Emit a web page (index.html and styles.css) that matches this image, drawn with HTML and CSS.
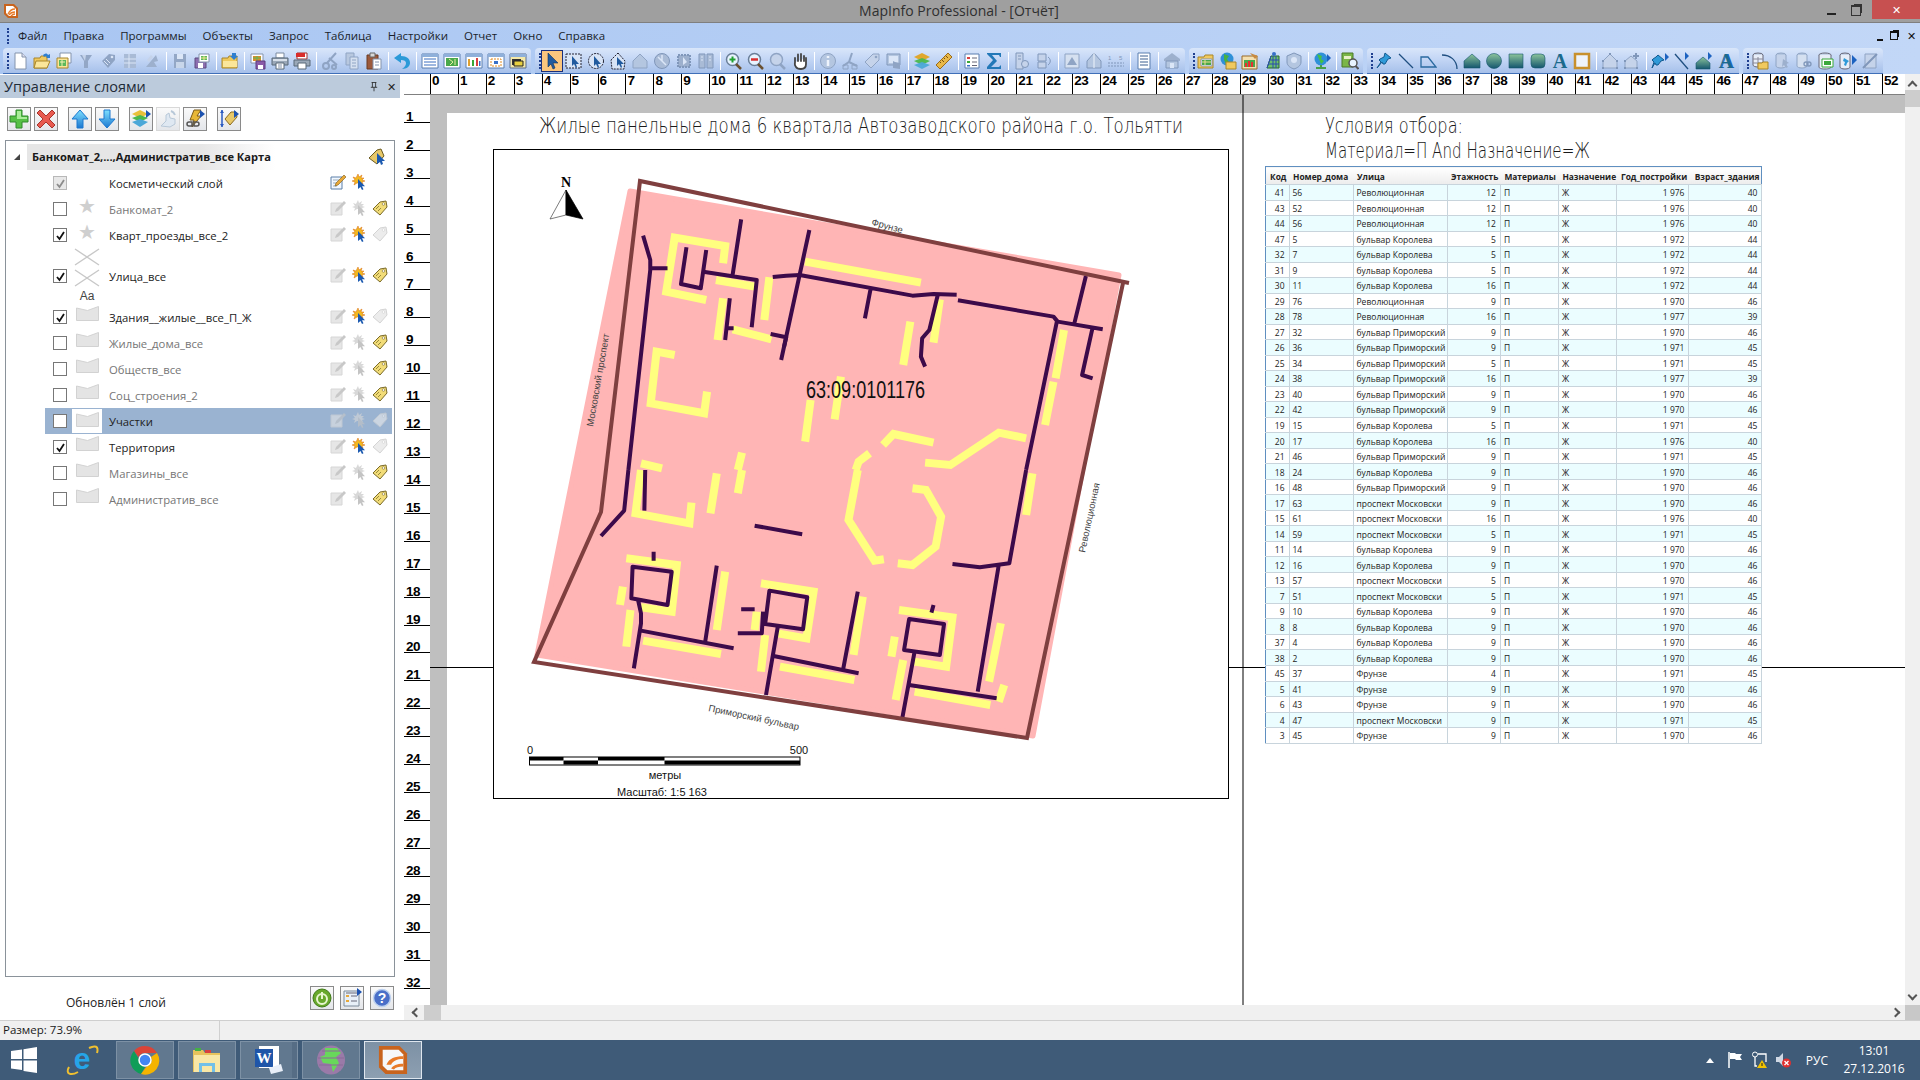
FILE: index.html
```html
<!DOCTYPE html>
<html lang="ru">
<head>
<meta charset="utf-8">
<title>MapInfo Professional - [Отчёт]</title>
<link rel="stylesheet" href="styles.css">
</head>
<body>
<svg class="defs" aria-hidden="true">
<defs>
<linearGradient id="gd" x1="0" y1="0" x2="0" y2="1"><stop offset="0" stop-color="#8cc49a"/><stop offset="1" stop-color="#14566e"/></linearGradient>
<linearGradient id="gb" x1="0" y1="0" x2="0" y2="1"><stop offset="0" stop-color="#7fe0ff"/><stop offset="1" stop-color="#1c78d0"/></linearGradient>
<symbol id="new" viewBox="0 0 18 18"><path d="M4 1h7l4 4v12H4z" fill="#fff" stroke="#8494ad"/><path d="M11 1v4h4" fill="#dde" stroke="#8494ad"/></symbol>
<symbol id="open" viewBox="0 0 18 18"><path d="M1 6h6l1-2h6v12H1z" fill="#f0c95e" stroke="#a9862a"/><path d="M1 16l2-7h14l-3 7z" fill="#fbe69a" stroke="#a9862a"/><path d="M10 3c2-2 4-2 5 0l2-1v4h-4l1-1c-1-1-2-1-3 0z" fill="#2f7fd0"/></symbol>
<symbol id="ws" viewBox="0 0 18 18"><path d="M5 1h11v10H5z" fill="#fff" stroke="#8494ad"/><path d="M2 6h11v10H2z" fill="#fbe69a" stroke="#a9862a"/><path d="M4 8h7v6H4z" fill="#5cb85c"/><path d="M5 10h5M7 8v6" stroke="#f6f3b0"/></symbol>
<symbol id="o1" viewBox="0 0 18 18"><path d="M3 3h12l-4 6v7H7V9z" fill="#93a7c6"/><path d="M5 3h4L8 9z" fill="#c5d3ea"/></symbol>
<symbol id="o2" viewBox="0 0 18 18"><path d="M3 9l7-7 6 1v5l-7 8z" fill="#8fa4c4"/><circle cx="13" cy="5" r="1.3" fill="#dbe6f7"/><path d="M5 9l4 4M7 7l4 4" stroke="#dbe6f7"/></symbol>
<symbol id="o3" viewBox="0 0 18 18"><path d="M3 2h12v14H3z" fill="#a9bbd6"/><path d="M3 7h12M3 11h12M8 2v14" stroke="#dbe6f7"/></symbol>
<symbol id="o4" viewBox="0 0 18 18"><path d="M3 15L13 3l2 6-4 1 3 5z" fill="#9db0cd"/><path d="M4 8l4-5 2 2-4 5z" fill="#c5d3ea"/></symbol>
<symbol id="fl" viewBox="0 0 18 18"><path d="M3 2h12v14H3z" fill="#93a7c6"/><path d="M6 2h6v5H6z" fill="#dbe6f7"/><path d="M5 10h8v6H5z" fill="#c8d6ea"/></symbol>
<symbol id="flc" viewBox="0 0 18 18"><path d="M2 6h11v10H2z" fill="#8d6fb0" stroke="#5d4a80"/><path d="M5 11h5v5H5z" fill="#fff"/><path d="M6 2h10v8H6z" fill="#fff" stroke="#8494ad"/><path d="M8 4h6v4H8z" fill="#5cb85c"/><path d="M8 6h6M11 4v4" stroke="#f0e890"/></symbol>
<symbol id="fa" viewBox="0 0 18 18"><path d="M1 6h6l1-2h8v12H1z" fill="#efc95b" stroke="#a9862a"/><path d="M2 9h14v6H2z" fill="#fbe69a"/><path d="M11 1h4v3l2 0-4 4-4-4h2z" fill="#2f7fd0"/></symbol>
<symbol id="sm" viewBox="0 0 18 18"><path d="M2 2h12v9H2z" fill="#fff" stroke="#8494ad"/><path d="M4 4h8v5H4z" fill="#d98c2b"/><path d="M4 6h8M8 4v5" stroke="#5cb85c"/><path d="M7 9h9v8H7z" fill="#8a5aa8" stroke="#5d3a80"/><path d="M9 13h5v4H9z" fill="#fff"/></symbol>
<symbol id="pr" viewBox="0 0 18 18"><path d="M5 1h8v5H5z" fill="#fff" stroke="#7a8aa0"/><path d="M1 6h16v7H1z" fill="#9aa8b8" stroke="#586878"/><path d="M2 7h14v2H2z" fill="#d8e0ea"/><path d="M5 11h8v6H5z" fill="#fff" stroke="#586878"/><path d="M7 13h4M7 15h4" stroke="#8494ad"/></symbol>
<symbol id="pdf" viewBox="0 0 18 18"><path d="M4 1h10v6H4z" fill="#fff" stroke="#a03030"/><path d="M3 1h9v4H3z" fill="#d92c2c"/><path d="M1 8h16v6H1z" fill="#9aa8b8" stroke="#586878"/><path d="M5 11h8v6H5z" fill="#fff" stroke="#586878"/></symbol>
<symbol id="sc" viewBox="0 0 18 18"><path d="M15 1L6 11M8 6l8 7" stroke="#8fa4c4" stroke-width="2" fill="none"/><circle cx="5" cy="14" r="3" fill="none" stroke="#8fa4c4" stroke-width="2"/><circle cx="13" cy="15" r="2" fill="none" stroke="#8fa4c4" stroke-width="2"/></symbol>
<symbol id="cp" viewBox="0 0 18 18"><path d="M3 1h8v12H3z" fill="#b8c8df" stroke="#8fa4c4"/><path d="M7 5h8v12H7z" fill="#d5e0f0" stroke="#8fa4c4"/><path d="M9 8h4M9 11h4M9 14h4" stroke="#8fa4c4"/></symbol>
<symbol id="pa" viewBox="0 0 18 18"><path d="M2 3h11v14H2z" fill="#9c5a3c" stroke="#6a3a22"/><path d="M5 1h5v4H5z" fill="#d8d8d8" stroke="#666"/><path d="M8 7h8v10H8z" fill="#fff" stroke="#8494ad"/><path d="M10 10h4M10 13h4" stroke="#8494ad"/></symbol>
<symbol id="un" viewBox="0 0 18 18"><path d="M1 6l7-5v3c6 0 9 3 9 7 0 3-3 6-8 6 3-2 4-4 4-6 0-2-2-3-5-3v3z" fill="#2b9ad8"/></symbol>
<symbol id="wt" viewBox="0 0 18 18"><path d="M1 2h16v14H1z" fill="#fff" stroke="#5a7fb0"/><path d="M1 2h16v3H1z" fill="#8fb0da"/><path d="M3 7h12M3 10h12M3 13h12" stroke="#3b6fc0"/></symbol>
<symbol id="wm" viewBox="0 0 18 18"><path d="M1 2h16v14H1z" fill="#fff" stroke="#5a7fb0"/><path d="M1 2h16v3H1z" fill="#8fb0da"/><path d="M3 6h12v8H3z" fill="#4aa84a"/><path d="M6 7l4 3-3 3M12 7v6" stroke="#e8f0a0" fill="none"/></symbol>
<symbol id="wc" viewBox="0 0 18 18"><path d="M1 2h16v14H1z" fill="#fff" stroke="#5a7fb0"/><path d="M1 2h16v3H1z" fill="#8fb0da"/><path d="M3 7h2v7H3z" fill="#e0a030"/><path d="M7 8h2v6H7z" fill="#38a838"/><path d="M11 6h2v8h-2z" fill="#d84040"/><path d="M14 9h1.500v5H14z" fill="#3870c8"/></symbol>
<symbol id="wl" viewBox="0 0 18 18"><path d="M1 2h16v14H1z" fill="#fff" stroke="#5a7fb0"/><path d="M1 2h16v3H1z" fill="#8fb0da"/><path d="M4 7h10v7H4z" fill="#fff" stroke="#e08a20" stroke-dasharray="2 1"/><path d="M7 9h4v3H7z" fill="#3870c8"/></symbol>
<symbol id="wb" viewBox="0 0 18 18"><path d="M1 2h16v14H1z" fill="#f4e8a8" stroke="#5a6f90"/><path d="M1 2h16v3H1z" fill="#8fb0da"/><path d="M3 7h9v6H3z" fill="#333"/><path d="M5 9h9v5H5z" fill="#e8d040" stroke="#222"/></symbol>
<symbol id="cu" viewBox="0 0 18 18"><path d="M5 1v14l3-3 2 5 2-1-2-5h5z" fill="#205a9e" stroke="#0f2f60" stroke-width=".6"/></symbol>
<symbol id="sr" viewBox="0 0 18 18"><path d="M1 2h15v14H1z" fill="#d8e4f6" stroke="#223" stroke-dasharray="2 1"/><path d="M7 4v10l2-2 2 4 1-1-1-3h3z" fill="#205a9e"/></symbol>
<symbol id="sa" viewBox="0 0 18 18"><circle cx="9" cy="9" r="7.500" fill="#d8e4f6" stroke="#223" stroke-dasharray="2 1"/><path d="M7 4v10l2-2 2 4 1-1-1-3h3z" fill="#205a9e"/></symbol>
<symbol id="sp" viewBox="0 0 18 18"><path d="M9 1l7 8-1 8H3L2 8z" fill="#d8e4f6" stroke="#223" stroke-dasharray="2 1"/><path d="M8 5v9l2-2 2 4 1-1-1-3h3z" fill="#205a9e"/></symbol>
<symbol id="hb" viewBox="0 0 18 18"><path d="M9 2l7 7v7H2V9z" fill="#b4c6e0" stroke="#8fa4c4"/></symbol>
<symbol id="oc" viewBox="0 0 18 18"><circle cx="9" cy="9" r="7.500" fill="#a9bbd6" stroke="#8097ba"/><path d="M5 5l8 8M9 3v6" stroke="#dbe6f7" stroke-width="1.500"/></symbol>
<symbol id="od" viewBox="0 0 18 18"><path d="M3 3h12v12H3z" fill="#9db0cd" stroke="#8097ba" stroke-dasharray="2 1" stroke-width="2"/><path d="M8 5v8l4-3z" fill="#dbe6f7"/></symbol>
<symbol id="oe" viewBox="0 0 18 18"><path d="M2 2h6v14H2zM10 2h6v14h-6z" fill="#a9bbd6" stroke="#8097ba"/><path d="M4 5h2M4 8h2M12 5h2M12 8h2" stroke="#dbe6f7"/></symbol>
<symbol id="zi" viewBox="0 0 18 18"><circle cx="7.500" cy="7.500" r="6" fill="#e8f4ff" stroke="#6a7f99" stroke-width="1.500"/><path d="M11 12l5 5" stroke="#6a5030" stroke-width="2.500"/><path d="M4.500 7.500h6M7.500 4.500v6" stroke="#20a030" stroke-width="2"/></symbol>
<symbol id="zo" viewBox="0 0 18 18"><circle cx="7.500" cy="7.500" r="6" fill="#e8f4ff" stroke="#6a7f99" stroke-width="1.500"/><path d="M11 12l5 5" stroke="#6a5030" stroke-width="2.500"/><path d="M4 7.500h7" stroke="#d83030" stroke-width="2.500"/></symbol>
<symbol id="zq" viewBox="0 0 18 18"><circle cx="7.500" cy="7.500" r="6" fill="#c5d3ea" stroke="#8fa4c4" stroke-width="1.500"/><path d="M11 12l5 5" stroke="#8fa4c4" stroke-width="2.500"/></symbol>
<symbol id="ha" viewBox="0 0 18 18"><path d="M4 10V6M7 9V2.500M10 9V2M13 9V4M4 10c0 3-1 2 1 5 1 2 3 2 5 2 3 0 5-2 5-5V6" fill="#fff" stroke="#444" stroke-width="1.800" stroke-linecap="round"/></symbol>
<symbol id="oi" viewBox="0 0 18 18"><circle cx="9" cy="9" r="7.500" fill="#b4c6e0" stroke="#8fa4c4"/><path d="M9 4v2M9 8v6" stroke="#eef4fc" stroke-width="2.500"/></symbol>
<symbol id="ol" viewBox="0 0 18 18"><path d="M11 1L8 10M2 14l6-4 8 4" stroke="#8fa4c4" stroke-width="2" fill="none"/><path d="M2 13h5v4H2zM11 13h5v4h-5z" fill="none" stroke="#8fa4c4"/></symbol>
<symbol id="ot" viewBox="0 0 18 18"><path d="M2 10l8-8 6 0v6l-8 8z" fill="#c5d3ea" stroke="#8fa4c4"/><circle cx="13" cy="5" r="1.300" fill="#8fa4c4"/></symbol>
<symbol id="om" viewBox="0 0 18 18"><path d="M2 2h13v11H2z" fill="#b4c6e0" stroke="#8097ba"/><path d="M4 4h9v7H4z" fill="#dbe6f7"/><path d="M8 16V9l2 1 5 1v6z" fill="#8fa4c4"/></symbol>
<symbol id="la" viewBox="0 0 18 18"><path d="M9 1l8 4-8 4-8-4z" fill="#e0a72e"/><path d="M1 9l8 4 8-4-8-3z" fill="#4cb84c" opacity=".95"/><path d="M1 13l8 4 8-4-8-3z" fill="#4ca8d8" opacity=".95"/></symbol>
<symbol id="ru" viewBox="0 0 18 18"><path d="M13 1l4 4L5 17l-4-4z" fill="#e8b848" stroke="#9a6a18"/><path d="M5 10l1 1M7 8l2 2M9 6l1 1M11 4l2 2" stroke="#7a5010"/></symbol>
<symbol id="lg" viewBox="0 0 18 18"><path d="M2 2h14v14H2z" fill="#fff" stroke="#5a7fb0"/><path d="M4 5h3v2H4z" fill="#d84040"/><path d="M4 9h3v2H4z" fill="#38a838"/><path d="M4 13h3v1.500H4z" fill="#3870c8"/><path d="M9 6h5M9 10h5M9 13.500h5" stroke="#667"/></symbol>
<symbol id="si" viewBox="0 0 18 18"><path d="M2 1h14v4l-1 0-1-2H7l5 6-6 6h8l2-2v4H2v-2l6-7-6-6z" fill="#2278b8"/></symbol>
<symbol id="og" viewBox="0 0 18 18"><path d="M3 1h7v16H3z" fill="#c5d3ea" stroke="#8097ba"/><circle cx="12" cy="12" r="3.500" fill="#c5d3ea" stroke="#8097ba"/><path d="M5 4h3M5 7h3" stroke="#8097ba"/></symbol>
<symbol id="og2" viewBox="0 0 18 18"><path d="M3 2h8v7H3zM3 10h8v6H3z" fill="#c5d3ea" stroke="#8097ba"/><path d="M13 5c3 2 3 6 0 8" fill="none" stroke="#8097ba"/></symbol>
<symbol id="oh" viewBox="0 0 18 18"><path d="M2 2h14v14H2z" fill="#d5e0f0" stroke="#8fa4c4"/><path d="M9 5l5 8H4z" fill="#8fa4c4"/></symbol>
<symbol id="ok" viewBox="0 0 18 18"><path d="M9 1l7 8v7H2V9z" fill="#b4c6e0" stroke="#8097ba"/><path d="M9 1v15" stroke="#eef4fc"/></symbol>
<symbol id="on" viewBox="0 0 18 18"><path d="M1 11h16M1 14h16" stroke="#8097ba" stroke-dasharray="2 1"/><text x="1" y="8" class="ic-t">1</text><text x="12" y="8" class="ic-t">5</text></symbol>
<symbol id="ls" viewBox="0 0 18 18"><path d="M3 1h12v16H3z" fill="#fff" stroke="#5a7fb0"/><path d="M5 4h8M5 7h8M5 10h8M5 13h8" stroke="#3b5f90"/></symbol>
<symbol id="ob" viewBox="0 0 18 18"><path d="M9 1l8 6v2H1V7z" fill="#9db0cd"/><path d="M3 9h12v7H3z" fill="#b4c6e0" stroke="#8097ba"/><path d="M7 11h4v5H7z" fill="#dbe6f7"/></symbol>
<symbol id="fm" viewBox="0 0 18 18"><path d="M1 5h6l1-2h8v13H1z" fill="#f0c95e" stroke="#a9862a"/><path d="M4 7h11v7H4z" fill="#fff" stroke="#8494ad"/><path d="M5 8h9v5H5z" fill="#4aa84a"/><path d="M8 8v5M5 10h9" stroke="#e8e090"/></symbol>
<symbol id="gf" viewBox="0 0 18 18"><circle cx="8" cy="7" r="6.500" fill="#2f90d8"/><path d="M5 2l5 2-2 3 2 3-3 2-2-4z" fill="#45b045"/><path d="M7 10h10v7H7z" fill="#f0c95e" stroke="#a9862a"/></symbol>
<symbol id="cm" viewBox="0 0 18 18"><path d="M1 4h15v13H1z" fill="#f4e0b0" stroke="#9a6a28"/><path d="M3 8h11v7H3z" fill="#4aa84a"/><path d="M5 15v-4M8 15V9M11 15v-5" stroke="#e83030" stroke-width="2"/><path d="M9 1l8 3-3 3z" fill="#c88a40"/></symbol>
<symbol id="gg" viewBox="0 0 18 18"><path d="M4 16L8 4h8v12z" fill="#6dc06d" stroke="#286828"/><path d="M8 4l-4 12M10 4v12M13 4v12M5 12h11M7 8h9" stroke="#2a4ab0" fill="none"/><circle cx="11" cy="2" r="2" fill="#3870c8"/></symbol>
<symbol id="os" viewBox="0 0 18 18"><path d="M9 1l7 3v6c0 4-4 6-7 7-3-1-7-3-7-7V4z" fill="#b4c6e0" stroke="#8097ba"/><circle cx="9" cy="8" r="3" fill="#dbe6f7"/></symbol>
<symbol id="gs" viewBox="0 0 18 18"><circle cx="8" cy="7" r="6.500" fill="#2f90d8"/><path d="M4 2l5 2-1 3 3 2-3 3-2-5z" fill="#45c045"/><path d="M8 13v2M3 16h10" stroke="#48a048" stroke-width="2"/><path d="M14 2l4 4-4 4z" fill="#1c62c0"/></symbol>
<symbol id="bk" viewBox="0 0 18 18"><path d="M1 1h11v14H1z" fill="#7ab648" stroke="#4a7828"/><path d="M3 4h7v3H3z" fill="#e8f0c8"/><circle cx="12" cy="11" r="4" fill="#e8f4ff" stroke="#555" stroke-width="1.500"/><path d="M14.500 14l3 3" stroke="#555" stroke-width="2"/></symbol>
<symbol id="pi" viewBox="0 0 18 18"><path d="M10 1l6 5-3 1-3 5-2 0-1-2-5 6 4-6-2-2 1-1 4-2z" fill="#2f9ad8" stroke="#125a90"/></symbol>
<symbol id="li" viewBox="0 0 18 18"><path d="M2 2l14 14" stroke="#1f4f80" stroke-width="1.300"/></symbol>
<symbol id="pl" viewBox="0 0 18 18"><path d="M2 15V5l7 0 8 10z" fill="none" stroke="#2a6aa0" stroke-width="1.300"/></symbol>
<symbol id="ar" viewBox="0 0 18 18"><path d="M1 3c8 0 15 5 15 14" fill="none" stroke="#1f4f80" stroke-width="1.300"/></symbol>
<symbol id="pg" viewBox="0 0 18 18"><path d="M9 2l8 7v7H1V9z" fill="url(#gd)" stroke="#14566e" stroke-width=".6"/></symbol>
<symbol id="el" viewBox="0 0 18 18"><circle cx="9" cy="9" r="7.500" fill="url(#gd)" stroke="#14566e" stroke-width=".6"/></symbol>
<symbol id="re" viewBox="0 0 18 18"><path d="M2 2h14v14H2z" fill="url(#gd)" stroke="#14566e" stroke-width=".6"/></symbol>
<symbol id="rr" viewBox="0 0 18 18"><rect x="2" y="2" width="14" height="14" rx="4" fill="url(#gd)" stroke="#14566e" stroke-width=".6"/></symbol>
<symbol id="fr" viewBox="0 0 18 18"><path d="M2 2h14v14H2z" fill="#eef3fb" stroke="#c8902c" stroke-width="2.500"/></symbol>
<symbol id="ph" viewBox="0 0 18 18"><path d="M9 2l7 7v7H2V9z" fill="#c5d3ea" stroke="#8fa4c4"/><path d="M8 1h2v2H8zM1 8h2v2H1zM15 8h2v2h-2zM1 15h2v2H1zM15 15h2v2h-2z" fill="#8097ba"/></symbol>
<symbol id="pp" viewBox="0 0 18 18"><path d="M8 4l6 5v7H2V9z" fill="#c5d3ea" stroke="#8fa4c4"/><path d="M1 15h2v2H1zM13 15h2v2h-2zM1 8h2v2H1z" fill="#8097ba"/><path d="M13 1v6M10 4h6" stroke="#8097ba" stroke-width="2"/></symbol>
<symbol id="pia" viewBox="0 0 18 18"><path d="M7 3l6 5-3 1-3 4-2 0-1-2-3 5 2-6-2-2 1-1 3-2z" fill="#2f9ad8" stroke="#125a90"/><path d="M14 1l4 4-4 4z" fill="#1c62c0"/></symbol>
<symbol id="lia" viewBox="0 0 18 18"><path d="M2 2l13 15" stroke="#1f4f80" stroke-width="1.300"/><path d="M12 0l4 4-4 4z" fill="#1c62c0"/></symbol>
<symbol id="pga" viewBox="0 0 18 18"><path d="M8 5l7 6v6H1v-6z" fill="url(#gd)" stroke="#14566e" stroke-width=".6"/><path d="M13 0l4 4-4 4z" fill="#1c62c0"/></symbol>
<symbol id="db" viewBox="0 0 18 18"><ellipse cx="7" cy="3" rx="5" ry="2" fill="#c8d6ea" stroke="#667"/><path d="M2 3v10c0 1 2 2 5 2s5-1 5-2V3" fill="#e8eef8" stroke="#667"/><path d="M2 7h10M2 11h10M7 5v10" stroke="#889"/><path d="M7 11h4l1-1h5v7H7z" fill="#f0c95e" stroke="#a9862a"/></symbol>
<symbol id="d1" viewBox="0 0 18 18"><ellipse cx="8" cy="3" rx="5" ry="2" fill="#b4c6e0" stroke="#8fa4c4"/><path d="M3 3v11c0 1 2 2 5 2s5-1 5-2V3" fill="#c5d3ea" stroke="#8fa4c4"/><path d="M10 7l6 4-3 1 2 3-2 1-2-3-2 2z" fill="#9db0cd"/></symbol>
<symbol id="d2" viewBox="0 0 18 18"><ellipse cx="7" cy="3" rx="5" ry="2" fill="#b4c6e0" stroke="#8fa4c4"/><path d="M2 3v11c0 1 2 2 5 2s5-1 5-2V3" fill="#d5e0f0" stroke="#8fa4c4"/><path d="M9 12a2 2 0 014 0 2 2 0 01-4 0zM12 12a2 2 0 014 0 2 2 0 01-4 0z" fill="none" stroke="#8097ba" stroke-width="1.300"/></symbol>
<symbol id="dt" viewBox="0 0 18 18"><ellipse cx="8" cy="3" rx="6" ry="2" fill="#c8d6ea" stroke="#667"/><path d="M2 3v12c0 1 2 2 6 2s6-1 6-2V3" fill="#e8eef8" stroke="#667"/><path d="M5 7h11v8H5z" fill="#fff" stroke="#38a838"/><path d="M7 9h7v4H7z" fill="#3ca83c"/></symbol>
<symbol id="dg" viewBox="0 0 18 18"><ellipse cx="6" cy="3" rx="5" ry="2" fill="#c8d6ea" stroke="#667"/><path d="M1 3v12c0 1 2 2 5 2s5-1 5-2V3" fill="#e8eef8" stroke="#667"/><path d="M5 6l5 3-2 2-1 3-2-1 1-3-2-1z" fill="#2f9ad8"/><path d="M13 3l5 5-5 5z" fill="#1c62c0"/></symbol>
<symbol id="sl" viewBox="0 0 18 18"><path d="M4 2h11v14H4z" fill="#c5d3ea" stroke="#8fa4c4"/><path d="M2 16L16 2" stroke="#8097ba" stroke-width="2"/></symbol>
<symbol id="add" viewBox="0 0 20 20"><path d="M7 1h6v6h6v6h-6v6H7v-6H1V7h6z" fill="#56c046" stroke="#2f8a2a"/><path d="M8 2h4v6h6v2H8z" fill="#a8ec98"/></symbol>
<symbol id="del" viewBox="0 0 20 20"><path d="M4 1l6 6 6-6 3 3-6 6 6 6-3 3-6-6-6 6-3-3 6-6-6-6z" fill="#e85a50" stroke="#a8342c"/></symbol>
<symbol id="up" viewBox="0 0 20 20"><path d="M10 1l8 9h-5v9H7v-9H2z" fill="url(#gb)" stroke="#1c78d0"/></symbol>
<symbol id="dn" viewBox="0 0 20 20"><path d="M10 19l8-9h-5V1H7v9H2z" fill="url(#gb)" stroke="#1c78d0"/></symbol>
<symbol id="lyr" viewBox="0 0 20 20"><path d="M9 1l8 4-8 4-8-4z" fill="#e8c03a"/><path d="M1 9l8 4 8-4-8-3z" fill="#4cb84c"/><path d="M1 13l8 5 8-5-8-3z" fill="#4ca8d8"/><path d="M15 1l5 4-5 4z" fill="#1c52b0"/></symbol>
<symbol id="rf" viewBox="0 0 20 20"><path d="M3 17l5-5V6l3-2 1 5 5 1v5l-5 3z" fill="#dfe8f2" stroke="#b8c8d8"/><path d="M13 2a7 7 0 014 4" fill="none" stroke="#b8c8d8" stroke-width="2"/></symbol>
<symbol id="lk" viewBox="0 0 20 20"><path d="M9 1h7l-4 6h4L7 18l2-7H5z" fill="#e8b838" stroke="#7a5a18"/><path d="M2 15a2 2 0 012-2h3v4H4a2 2 0 01-2-2zM9 13h3a2 2 0 010 4H9z" fill="none" stroke="#555" stroke-width="1.500"/><path d="M15 1l5 4-5 4z" fill="#1c52b0"/></symbol>
<symbol id="tg" viewBox="0 0 20 20"><path d="M6 10l6-7 5 0 1 5-7 8z" fill="#e8c868" stroke="#8a6a20"/><path d="M3 1v17" stroke="#2a5ac0" stroke-width="1.500"/><path d="M1 4l2-3 2 3zM1 15l2 3 2-3z" fill="#2a5ac0"/><path d="M15 1l5 4-5 4z" fill="#1c52b0"/></symbol>
<symbol id="pw" viewBox="0 0 20 20"><circle cx="10" cy="10" r="9" fill="#68a82c" stroke="#3f7a18"/><circle cx="10" cy="11" r="5" fill="none" stroke="#e8f6d0" stroke-width="2"/><path d="M10 4v7" stroke="#e8f6d0" stroke-width="2"/></symbol>
<symbol id="li2" viewBox="0 0 20 20"><path d="M2 3h15v15H2z" fill="#e8f0f8" stroke="#7a8a9a"/><path d="M4 7h3v2H4zM4 12h3v2H4z" fill="#e8a838"/><path d="M9 8h6M9 13h6M4 5h11" stroke="#667"/><path d="M15 0l5 4-5 4z" fill="#1c52b0"/></symbol>
<symbol id="hp" viewBox="0 0 20 20"><circle cx="10" cy="10" r="8.500" fill="#4a6fc8" stroke="#bcd0ee" stroke-width="1.500"/><text x="10" y="15" class="ic-q">?</text></symbol>
<symbol id="penA" viewBox="0 0 16 16"><path d="M1 3h11v12H1z" fill="#f2f8ff" stroke="#5a7fa8"/><path d="M3 6h6M3 9h5M3 12h4" stroke="#9ab"/><path d="M14 1l2 2-8 8-3 1 1-3z" fill="#e8a838" stroke="#7a5a18" stroke-width=".6"/></symbol>
<symbol id="penO" viewBox="0 0 16 16"><path d="M1 3h11v12H1z" fill="#e6e6e6" stroke="#d6d6d6"/><path d="M14 1l2 2-8 8-3 1 1-3z" fill="#c8c8c8"/></symbol>
<symbol id="sA" viewBox="0 0 16 16"><path d="M7 0l1 3 3-2-1 3 3 0-2 2 3 1-3 1 1 2-3-1H7L6 9 3 11l1-3-3-1 3-1-2-3 3 1z" fill="#f2b820" stroke="#d86a10" stroke-width=".5"/><path d="M7 5v10l2.500-2 1.500 3 1.500-.7-1.500-3h3z" fill="#1c5ab0"/></symbol>
<symbol id="sO" viewBox="0 0 16 16"><path d="M7 0l1 3 3-2-1 3 3 0-2 2 3 1-3 1 1 2-3-1H7L6 9 3 11l1-3-3-1 3-1-2-3 3 1z" fill="#d8d8d8"/><path d="M7 5v10l2.500-2 1.500 3 1.500-.7-1.500-3h3z" fill="#c4c4c4"/></symbol>
<symbol id="tY" viewBox="0 0 16 16"><path d="M1 9l7-7 6-1 1 6-7 8z" fill="#f2dc78" stroke="#7a6a28"/><circle cx="11.500" cy="4" r="1.300" fill="#fff" stroke="#7a6a28" stroke-width=".6"/><path d="M4 9l3-3M6 11l3-3" stroke="#9a8a38"/></symbol>
<symbol id="tG" viewBox="0 0 16 16"><path d="M1 9l7-7 6-1 1 6-7 8z" fill="#ececec" stroke="#d4d4d4"/><circle cx="11.500" cy="4" r="1.300" fill="#fff" stroke="#ccc" stroke-width=".6"/></symbol>
<symbol id="tC" viewBox="0 0 18 18"><path d="M1 10l8-8 4-1 3 7-7 8z" fill="#e8c868" stroke="#6a5a20"/><path d="M9 5v11l3-2 1 3 2-1-1-3h3z" fill="#1c5ab0"/></symbol>
<symbol id="sw" viewBox="0 0 23 15"><path d="M.5 2l11 2.500 11-4V14.500H.5z" fill="#e4e4e4" stroke="#d2d2d2"/></symbol>
<symbol id="xs" viewBox="0 0 26 18"><path d="M1 1l24 16M25 1L1 17" stroke="#c8c8c8" stroke-width="1.400"/></symbol>
<symbol id="chk" viewBox="0 0 11 11"><path d="M2 6l2.500 3L9 2" fill="none" stroke="currentColor" stroke-width="1.800"/></symbol>
</defs>
</svg>

<header class="titlebar">
  <svg class="app-ico" viewBox="0 0 16 16"><path d="M1 1h10l4 4v10H5l-4-4z" fill="#c8641e"/><path d="M3 3h7l3 3v7H6l-3-3z" fill="#fff"/><path d="M5 11c2-4 4-5 7-5M6 12c2-3 4-3 6-3M8 13c1-1 3-2 4-2" stroke="#e87a28" stroke-width="1.300" fill="none"/></svg>
  <span class="title-text">MapInfo Professional - [Отчёт]</span>
  <div class="win-ctrls">
    <span class="wc-min"></span>
    <span class="wc-max"></span>
    <span class="wc-close">✕</span>
  </div>
</header>

<nav class="menubar">
  <span class="grip"></span>
  <ul class="menu">
    <li>Файл</li><li>Правка</li><li>Программы</li><li>Объекты</li><li>Запрос</li><li>Таблица</li><li>Настройки</li><li>Отчет</li><li>Окно</li><li>Справка</li>
  </ul>
  <div class="mdi-ctrls">
    <span class="mdi-min"></span>
    <span class="mdi-max"></span>
    <span class="mdi-close">✕</span>
  </div>
</nav>

<div class="toolstrip">
  <div class="tb tb1"><span class="grip"></span>
    <svg class="i"><use href="#new"/></svg><svg class="i"><use href="#open"/></svg><svg class="i"><use href="#ws"/></svg><svg class="i"><use href="#o1"/></svg><svg class="i"><use href="#o2"/></svg><svg class="i"><use href="#o3"/></svg><svg class="i"><use href="#o4"/></svg><b class="sep"></b>
    <svg class="i"><use href="#fl"/></svg><svg class="i"><use href="#flc"/></svg><b class="sep"></b>
    <svg class="i"><use href="#fa"/></svg><b class="sep"></b>
    <svg class="i"><use href="#sm"/></svg><svg class="i"><use href="#pr"/></svg><svg class="i"><use href="#pdf"/></svg><b class="sep"></b>
    <svg class="i"><use href="#sc"/></svg><svg class="i"><use href="#cp"/></svg><svg class="i"><use href="#pa"/></svg><b class="sep"></b>
    <svg class="i"><use href="#un"/></svg><b class="sep"></b>
    <svg class="i"><use href="#wt"/></svg><svg class="i"><use href="#wm"/></svg><svg class="i"><use href="#wc"/></svg><svg class="i"><use href="#wl"/></svg><svg class="i"><use href="#wb"/></svg>
  </div>
  <div class="tb tb2"><span class="grip"></span>
    <span class="sel"><svg class="i"><use href="#cu"/></svg></span><svg class="i"><use href="#sr"/></svg><svg class="i"><use href="#sa"/></svg><svg class="i"><use href="#sp"/></svg><svg class="i"><use href="#hb"/></svg><svg class="i"><use href="#oc"/></svg><svg class="i"><use href="#od"/></svg><svg class="i"><use href="#oe"/></svg><b class="sep"></b>
    <svg class="i"><use href="#zi"/></svg><svg class="i"><use href="#zo"/></svg><svg class="i"><use href="#zq"/></svg><svg class="i"><use href="#ha"/></svg><b class="sep"></b>
    <svg class="i"><use href="#oi"/></svg><svg class="i"><use href="#ol"/></svg><svg class="i"><use href="#ot"/></svg><svg class="i"><use href="#om"/></svg><b class="sep"></b>
    <svg class="i"><use href="#la"/></svg><svg class="i"><use href="#ru"/></svg><b class="sep"></b>
    <svg class="i"><use href="#lg"/></svg><svg class="i"><use href="#si"/></svg><b class="sep"></b>
    <svg class="i"><use href="#og"/></svg><svg class="i"><use href="#og2"/></svg><b class="sep"></b>
    <svg class="i"><use href="#oh"/></svg><svg class="i"><use href="#ok"/></svg><svg class="i"><use href="#on"/></svg><b class="sep"></b>
    <svg class="i"><use href="#ls"/></svg><b class="sep"></b>
    <svg class="i"><use href="#ob"/></svg>
  </div>
  <div class="tb tb3"><span class="grip"></span>
    <svg class="i"><use href="#fm"/></svg><svg class="i"><use href="#gf"/></svg><svg class="i"><use href="#cm"/></svg><svg class="i"><use href="#gg"/></svg><svg class="i"><use href="#os"/></svg><b class="sep"></b>
    <svg class="i"><use href="#gs"/></svg><b class="sep"></b>
    <svg class="i"><use href="#bk"/></svg>
  </div>
  <div class="tb tb4"><span class="grip"></span>
    <svg class="i"><use href="#pi"/></svg><svg class="i"><use href="#li"/></svg><svg class="i"><use href="#pl"/></svg><svg class="i"><use href="#ar"/></svg><svg class="i"><use href="#pg"/></svg><svg class="i"><use href="#el"/></svg><svg class="i"><use href="#re"/></svg><svg class="i"><use href="#rr"/></svg><span class="tA">A</span><svg class="i"><use href="#fr"/></svg><b class="sep"></b>
    <svg class="i"><use href="#ph"/></svg><svg class="i"><use href="#pp"/></svg><b class="sep"></b>
    <svg class="i"><use href="#pia"/></svg><svg class="i"><use href="#lia"/></svg><svg class="i"><use href="#pga"/></svg><span class="tA tA-arrow">A</span>
  </div>
  <div class="tb tb5"><span class="grip"></span>
    <svg class="i"><use href="#db"/></svg><svg class="i"><use href="#d1"/></svg><svg class="i"><use href="#d2"/></svg><svg class="i"><use href="#dt"/></svg><svg class="i"><use href="#dg"/></svg><svg class="i"><use href="#sl"/></svg>
  </div>
</div>

<main class="main">
  <aside class="panel">
    <div class="panel-head"><span>Управление слоями</span>
      <svg class="pin" viewBox="0 0 10 12"><path d="M2 1h6M3 1v6M7 1v6M1 7h8M5 7v5" stroke="#222" fill="none"/></svg>
      <span class="panel-x">✕</span>
    </div>
    <div class="panel-tools">
      <span class="pb"><svg><use href="#add"/></svg></span><span class="pb"><svg><use href="#del"/></svg></span>
      <span class="pb gap"><svg><use href="#up"/></svg></span><span class="pb"><svg><use href="#dn"/></svg></span>
      <span class="pb gap"><svg><use href="#lyr"/></svg></span><span class="pb off"><svg><use href="#rf"/></svg></span><span class="pb"><svg><use href="#lk"/></svg></span>
      <span class="pb gap"><svg><use href="#tg"/></svg></span>
    </div>
    <div class="tree">
      <div class="map-row"><i class="twist"></i><span class="map-name">Банкомат_2,...,Административ_все Карта</span><svg class="tag-cur"><use href="#tC"/></svg></div>
      <div class="lr"><span class="cb on dis"><svg><use href="#chk"/></svg></span><span class="sym"></span><span class="nm">Косметический слой</span><span class="acts"><svg><use href="#penA"/></svg><svg><use href="#sA"/></svg><svg></svg></span></div>
      <div class="lr hid"><span class="cb"></span><span class="sym star">★</span><span class="nm">Банкомат_2</span><span class="acts"><svg><use href="#penO"/></svg><svg><use href="#sO"/></svg><svg><use href="#tY"/></svg></span></div>
      <div class="lr"><span class="cb on"><svg><use href="#chk"/></svg></span><span class="sym star">★</span><span class="nm">Кварт_проезды_все_2</span><span class="acts"><svg><use href="#penO"/></svg><svg><use href="#sA"/></svg><svg><use href="#tG"/></svg></span></div>
      <div class="lr tall"><span class="cb on"><svg><use href="#chk"/></svg></span><span class="sym multi"><svg class="xs"><use href="#xs"/></svg><svg class="xs"><use href="#xs"/></svg><em>Aa</em></span><span class="nm">Улица_все</span><span class="acts"><svg><use href="#penO"/></svg><svg><use href="#sA"/></svg><svg><use href="#tY"/></svg></span></div>
      <div class="lr"><span class="cb on"><svg><use href="#chk"/></svg></span><span class="sym"><svg class="sw"><use href="#sw"/></svg></span><span class="nm">Здания__жилые__все_П_Ж</span><span class="acts"><svg><use href="#penO"/></svg><svg><use href="#sA"/></svg><svg><use href="#tG"/></svg></span></div>
      <div class="lr hid"><span class="cb"></span><span class="sym"><svg class="sw"><use href="#sw"/></svg></span><span class="nm">Жилые_дома_все</span><span class="acts"><svg><use href="#penO"/></svg><svg><use href="#sO"/></svg><svg><use href="#tY"/></svg></span></div>
      <div class="lr hid"><span class="cb"></span><span class="sym"><svg class="sw"><use href="#sw"/></svg></span><span class="nm">Обществ_все</span><span class="acts"><svg><use href="#penO"/></svg><svg><use href="#sO"/></svg><svg><use href="#tY"/></svg></span></div>
      <div class="lr hid"><span class="cb"></span><span class="sym"><svg class="sw"><use href="#sw"/></svg></span><span class="nm">Соц_строения_2</span><span class="acts"><svg><use href="#penO"/></svg><svg><use href="#sO"/></svg><svg><use href="#tY"/></svg></span></div>
      <div class="lr picked"><span class="cb"></span><span class="sym"><svg class="sw"><use href="#sw"/></svg></span><span class="nm">Участки</span><span class="acts"><svg><use href="#penO"/></svg><svg><use href="#sO"/></svg><svg><use href="#tG"/></svg></span></div>
      <div class="lr"><span class="cb on"><svg><use href="#chk"/></svg></span><span class="sym"><svg class="sw"><use href="#sw"/></svg></span><span class="nm">Территория</span><span class="acts"><svg><use href="#penO"/></svg><svg><use href="#sA"/></svg><svg><use href="#tG"/></svg></span></div>
      <div class="lr hid"><span class="cb"></span><span class="sym"><svg class="sw"><use href="#sw"/></svg></span><span class="nm">Магазины_все</span><span class="acts"><svg><use href="#penO"/></svg><svg><use href="#sO"/></svg><svg><use href="#tY"/></svg></span></div>
      <div class="lr hid"><span class="cb"></span><span class="sym"><svg class="sw"><use href="#sw"/></svg></span><span class="nm">Административ_все</span><span class="acts"><svg><use href="#penO"/></svg><svg><use href="#sO"/></svg><svg><use href="#tY"/></svg></span></div>
    </div>
    <div class="panel-foot">
      <span class="foot-msg">Обновлён 1 слой</span>
      <span class="pb"><svg><use href="#pw"/></svg></span><span class="pb"><svg><use href="#li2"/></svg></span><span class="pb"><svg><use href="#hp"/></svg></span>
    </div>
  </aside>

  <section class="view">
    <div class="ruler-corner"></div>
    <div class="hruler">
      <span>0</span><span>1</span><span>2</span><span>3</span><span>4</span><span>5</span><span>6</span><span>7</span><span>8</span><span>9</span><span>10</span><span>11</span><span>12</span><span>13</span><span>14</span><span>15</span><span>16</span><span>17</span><span>18</span><span>19</span><span>20</span><span>21</span><span>22</span><span>23</span><span>24</span><span>25</span><span>26</span><span>27</span><span>28</span><span>29</span><span>30</span><span>31</span><span>32</span><span>33</span><span>34</span><span>35</span><span>36</span><span>37</span><span>38</span><span>39</span><span>40</span><span>41</span><span>42</span><span>43</span><span>44</span><span>45</span><span>46</span><span>47</span><span>48</span><span>49</span><span>50</span><span>51</span><span>52</span>
    </div>
    <div class="vbar"><i class="arr up-a"></i><i class="vthumb"></i><i class="arr dn-a"></i></div>
    <div class="vruler">
      <span>1</span><span>2</span><span>3</span><span>4</span><span>5</span><span>6</span><span>7</span><span>8</span><span>9</span><span>10</span><span>11</span><span>12</span><span>13</span><span>14</span><span>15</span><span>16</span><span>17</span><span>18</span><span>19</span><span>20</span><span>21</span><span>22</span><span>23</span><span>24</span><span>25</span><span>26</span><span>27</span><span>28</span><span>29</span><span>30</span><span>31</span><span>32</span>
    </div>
    <div class="canvas">
      <div class="page"></div>
      <svg class="report" viewBox="430 95 1475 910">
        <path class="guide" d="M1243 95V1005M430 667.500H1905"/>
        <rect class="frame" x="493.500" y="149.500" width="735" height="649"/>
        <text class="cad" x="539" y="133" textLength="644" lengthAdjust="spacingAndGlyphs">Жилые панельные дома 6 квартала Автозаводского района г.о. Тольятти</text>
        <text class="cad" x="1325" y="133" textLength="138" lengthAdjust="spacingAndGlyphs">Условия отбора:</text>
        <text class="cad" x="1325" y="158" textLength="265" lengthAdjust="spacingAndGlyphs">Материал=П And Назначение=Ж</text>

        <path class="parcel" d="M630 191L1119 275L1033 736L537 655Z"/>
        <g transform="translate(500 140) scale(.4209 .3333)">
          <g class="yel">
            <path d="M530 370L535 318L415 293L395 455L490 480"/>
            <path d="M513 420L605 440M530 475L517 600M640 412L628 540M553 568L645 598"/>
            <path d="M725 365L1000 428M1045 478L1030 608M975 545L958 675"/>
            <path d="M415 645L372 635L358 790L485 820L492 755"/>
            <path d="M810 710L795 838M738 780L725 905M1340 570L1320 715M1315 725L1295 855"/>
            <path d="M1250 895L1185 878L1070 975L1010 968M1030 908L935 882L910 915M878 940L852 965L845 990M575 938L565 990M385 985L335 970"/>
          </g>
          <g class="pur">
            <path d="M340 287L357 360V390L305 990M357 385H398M443 322L430 432L477 445L490 330"/>
            <path d="M483 395L610 420L598 562M573 238L552 410M735 270L668 660"/>
            <path d="M648 411L680 407L712 405L980 467L1030 462L1085 464M880 450L867 535"/>
            <path d="M1040 465L1020 570L1003 595L1000 650L1010 680"/>
            <path d="M1088 481L1315 530L1325 545L1432 568M1392 408L1365 548M1407 568L1383 705L1408 715"/>
            <path d="M1323 545L1250 990M546 475L535 600M535 565H555M643 582L680 592L675 620"/>
          </g>
        </g>
        <g transform="translate(500 470) scale(.4209 .3333)">
          <g class="yel">
            <path d="M335 0L322 130L450 160L455 98M515 10L500 130M575 0L565 70"/>
            <path d="M850 0L828 150L890 272L912 268M980 55L1012 60L1048 140L1035 230L980 285L945 280M1265 10L1250 135"/>
            <path d="M300 265L420 285L408 425L335 412M292 350L285 405M310 420L300 530M340 512L525 552M535 305L515 480"/>
            <path d="M620 340L745 365L728 505L660 490M610 425L605 480M630 495L620 605M665 590L842 630M862 380L840 555"/>
            <path d="M948 420L1075 442L1060 590L985 575M938 500L930 560M958 570L940 690M985 665L1165 705M1190 460L1162 635M1198 645L1185 695"/>
          </g>
          <g class="pur">
            <path d="M305 0L295 122L240 198M345 0L343 122M605 167L718 193M365 245V272M1250 0L1210 280L1140 292L1075 282M1185 285L1135 665"/>
            <path d="M315 290L408 305L398 405L312 385ZM328 390L335 430V460L318 595M335 482L555 535M515 287L487 520"/>
            <path d="M573 418H605M565 490H622L625 425M640 362L730 382L720 478L630 462ZM660 470L632 675M650 558L852 610M850 365L815 600"/>
            <path d="M1030 405L1025 428M972 447L1055 462L1045 555L960 540ZM985 545L955 750M972 645L1180 685"/>
          </g>
        </g>
        <path class="bnd" d="M1129 283L640 181L601 512L534 662L1027 738L1123 283"/>
        <text class="street" transform="translate(871 225) rotate(15)">Фрунзе</text>
        <text class="street" transform="translate(593 427) rotate(-80)">Московский проспект</text>
        <text class="street" transform="translate(1085 553) rotate(-78)">Революционная</text>
        <text class="street" transform="translate(708 711) rotate(12)">Приморский бульвар</text>
        <text class="parcel-id" x="806" y="398" textLength="119" lengthAdjust="spacingAndGlyphs">63:09:0101176</text>

        <text class="north" x="566" y="187">N</text>
        <path class="na-l" d="M566 190L550 219L566 215Z"/>
        <path class="na-r" d="M566 190L583 219L566 215Z"/>

        <rect class="sb-k" x="529.500" y="757" width="34" height="3.500"/><rect class="sb-k" x="563.500" y="760.500" width="34.500" height="4"/>
        <rect class="sb-k" x="598" y="757" width="66.500" height="3.500"/><rect class="sb-k" x="664.500" y="760.500" width="135.500" height="4"/>
        <rect class="sb-o" x="529.500" y="757" width="270.500" height="8"/>
        <text class="scale" x="530" y="754" text-anchor="middle">0</text>
        <text class="scale" x="799" y="754" text-anchor="middle">500</text>
        <text class="scale" x="665" y="779" text-anchor="middle">метры</text>
        <text class="scale" x="662" y="796" text-anchor="middle">Масштаб: 1:5 163</text>
      </svg>

      <table class="res">
        <colgroup><col class="c1"><col class="c2"><col class="c3"><col class="c4"><col class="c5"><col class="c6"><col class="c7"><col class="c8"></colgroup>
        <thead><tr><th>Код</th><th>Номер_дома</th><th>Улица</th><th>Этажность</th><th>Материалы</th><th>Назначение</th><th>Год_постройки</th><th>Взраст_здания</th></tr></thead>
        <tbody>
<tr><td>41</td><td>56</td><td>Революционная</td><td>12</td><td>П</td><td>Ж</td><td>1 976</td><td>40</td></tr>
<tr><td>43</td><td>52</td><td>Революционная</td><td>12</td><td>П</td><td>Ж</td><td>1 976</td><td>40</td></tr>
<tr><td>44</td><td>56</td><td>Революционная</td><td>12</td><td>П</td><td>Ж</td><td>1 976</td><td>40</td></tr>
<tr><td>47</td><td>5</td><td>бульвар Королева</td><td>5</td><td>П</td><td>Ж</td><td>1 972</td><td>44</td></tr>
<tr><td>32</td><td>7</td><td>бульвар Королева</td><td>5</td><td>П</td><td>Ж</td><td>1 972</td><td>44</td></tr>
<tr><td>31</td><td>9</td><td>бульвар Королева</td><td>5</td><td>П</td><td>Ж</td><td>1 972</td><td>44</td></tr>
<tr><td>30</td><td>11</td><td>бульвар Королева</td><td>16</td><td>П</td><td>Ж</td><td>1 972</td><td>44</td></tr>
<tr><td>29</td><td>76</td><td>Революционная</td><td>9</td><td>П</td><td>Ж</td><td>1 970</td><td>46</td></tr>
<tr><td>28</td><td>78</td><td>Революционная</td><td>16</td><td>П</td><td>Ж</td><td>1 977</td><td>39</td></tr>
<tr><td>27</td><td>32</td><td>бульвар Приморский</td><td>9</td><td>П</td><td>Ж</td><td>1 970</td><td>46</td></tr>
<tr><td>26</td><td>36</td><td>бульвар Приморский</td><td>9</td><td>П</td><td>Ж</td><td>1 971</td><td>45</td></tr>
<tr><td>25</td><td>34</td><td>бульвар Приморский</td><td>5</td><td>П</td><td>Ж</td><td>1 971</td><td>45</td></tr>
<tr><td>24</td><td>38</td><td>бульвар Приморский</td><td>16</td><td>П</td><td>Ж</td><td>1 977</td><td>39</td></tr>
<tr><td>23</td><td>40</td><td>бульвар Приморский</td><td>9</td><td>П</td><td>Ж</td><td>1 970</td><td>46</td></tr>
<tr><td>22</td><td>42</td><td>бульвар Приморский</td><td>9</td><td>П</td><td>Ж</td><td>1 970</td><td>46</td></tr>
<tr><td>19</td><td>15</td><td>бульвар Королева</td><td>5</td><td>П</td><td>Ж</td><td>1 971</td><td>45</td></tr>
<tr><td>20</td><td>17</td><td>бульвар Королева</td><td>16</td><td>П</td><td>Ж</td><td>1 976</td><td>40</td></tr>
<tr><td>21</td><td>46</td><td>бульвар Приморский</td><td>9</td><td>П</td><td>Ж</td><td>1 971</td><td>45</td></tr>
<tr><td>18</td><td>24</td><td>бульвар Королева</td><td>9</td><td>П</td><td>Ж</td><td>1 970</td><td>46</td></tr>
<tr><td>16</td><td>48</td><td>бульвар Приморский</td><td>9</td><td>П</td><td>Ж</td><td>1 970</td><td>46</td></tr>
<tr><td>17</td><td>63</td><td>проспект Московски</td><td>9</td><td>П</td><td>Ж</td><td>1 970</td><td>46</td></tr>
<tr><td>15</td><td>61</td><td>проспект Московски</td><td>16</td><td>П</td><td>Ж</td><td>1 976</td><td>40</td></tr>
<tr><td>14</td><td>59</td><td>проспект Московски</td><td>5</td><td>П</td><td>Ж</td><td>1 971</td><td>45</td></tr>
<tr><td>11</td><td>14</td><td>бульвар Королева</td><td>9</td><td>П</td><td>Ж</td><td>1 970</td><td>46</td></tr>
<tr><td>12</td><td>16</td><td>бульвар Королева</td><td>9</td><td>П</td><td>Ж</td><td>1 970</td><td>46</td></tr>
<tr><td>13</td><td>57</td><td>проспект Московски</td><td>5</td><td>П</td><td>Ж</td><td>1 970</td><td>46</td></tr>
<tr><td>7</td><td>51</td><td>проспект Московски</td><td>5</td><td>П</td><td>Ж</td><td>1 971</td><td>45</td></tr>
<tr><td>9</td><td>10</td><td>бульвар Королева</td><td>9</td><td>П</td><td>Ж</td><td>1 970</td><td>46</td></tr>
<tr><td>8</td><td>8</td><td>бульвар Королева</td><td>9</td><td>П</td><td>Ж</td><td>1 970</td><td>46</td></tr>
<tr><td>37</td><td>4</td><td>бульвар Королева</td><td>9</td><td>П</td><td>Ж</td><td>1 970</td><td>46</td></tr>
<tr><td>38</td><td>2</td><td>бульвар Королева</td><td>9</td><td>П</td><td>Ж</td><td>1 970</td><td>46</td></tr>
<tr><td>45</td><td>37</td><td>Фрунзе</td><td>4</td><td>П</td><td>Ж</td><td>1 971</td><td>45</td></tr>
<tr><td>5</td><td>41</td><td>Фрунзе</td><td>9</td><td>П</td><td>Ж</td><td>1 970</td><td>46</td></tr>
<tr><td>6</td><td>43</td><td>Фрунзе</td><td>9</td><td>П</td><td>Ж</td><td>1 970</td><td>46</td></tr>
<tr><td>4</td><td>47</td><td>проспект Московски</td><td>9</td><td>П</td><td>Ж</td><td>1 971</td><td>45</td></tr>
<tr><td>3</td><td>45</td><td>Фрунзе</td><td>9</td><td>П</td><td>Ж</td><td>1 970</td><td>46</td></tr>
        </tbody>
      </table>
    </div>
    <div class="hbar"><i class="arr lf-a"></i><i class="hthumb"></i><i class="arr rt-a"></i></div>
    <div class="sb-corner"></div>
  </section>
</main>

<footer class="status"><span class="st-cell">Размер: 73.9%</span></footer>

<div class="taskbar">
  <svg class="start" viewBox="0 0 26 26"><path d="M0 4l11-1.500V12H0zM12.500 2.300L26 0v12H12.500zM0 13.500h11V23L0 21.500zM12.500 13.500H26V26l-13.500-2z" fill="#fff"/></svg>
  <svg class="ie" viewBox="0 0 34 34"><text x="17" y="26" class="ie-e">e</text><path d="M4 24C0 31 6 33 13 29M24 5c6-3 10-2 8 5" fill="none" stroke="#f0c030" stroke-width="2"/></svg>
  <span class="tk"><svg viewBox="0 0 30 30"><path d="M15 1a14 14 0 0112 7H15a7 7 0 00-6.500 4L4 6a14 14 0 0111-5z" fill="#db4437"/><path d="M4 6l6 10a7 7 0 005 6l-4 7A14 14 0 014 6z" fill="#0f9d58"/><path d="M27 8a14 14 0 01-16 21l5.500-7.500A7 7 0 0021 12z" fill="#f4b400"/><circle cx="15" cy="15" r="6" fill="#4285f4" stroke="#fff" stroke-width="1.500"/></svg></span>
  <span class="tk"><svg viewBox="0 0 30 30"><path d="M1 5h10l2 3h15v19H1z" fill="#e8c35c"/><path d="M2 10h26v17H2z" fill="#f9e7a6"/><path d="M3 3h6v3H3z" fill="#45b045"/><path d="M13 5h6v3h-6z" fill="#d84040"/><path d="M7 18h16v9h-3v-6H10v6H7z" fill="#72c0e8"/></svg></span>
  <span class="tk tk-stack"><svg viewBox="0 0 30 30"><path d="M5 1h20v22H5z" fill="#fff"/><path d="M1 4h18v18H1z" fill="#1f55a8"/><text x="10" y="18" class="word-w">W</text><path d="M15 23l12-4 2 7-12 3z" fill="#e8eef8"/></svg></span>
  <span class="tk"><svg viewBox="0 0 30 30"><ellipse cx="15" cy="15" rx="14" ry="14.500" fill="#9a7aa8"/><path d="M9 3h12l4 5-5 4 3 6-6 9-2-8-8-1-3-6 5-2z" fill="#68d85a"/><path d="M6 6h18M2 13h26M3 20h24" stroke="#8a6a98"/></svg></span>
  <span class="tk tk-on"><svg viewBox="0 0 32 32"><path d="M1 1h22l8 8v22H8l-7-7z" fill="#c8641e"/><path d="M5 5h17l5 5v17H10l-5-5z" fill="#f6f8fa"/><path d="M9 21c3-7 9-9 18-9v3c-7 0-11 2-13 6zM14 25c2-3 6-5 13-5v3c-5 0-8 1-10 3z" fill="#e87a28"/></svg></span>
  <div class="tray">
    <i class="tray-up"></i>
    <svg class="tr" viewBox="0 0 16 18"><path d="M2 1v16" stroke="#fff" stroke-width="1.500"/><path d="M3 2h5l1 1h6l-2 3 2 3H9L8 8H3z" fill="#fff"/></svg>
    <svg class="tr" viewBox="0 0 16 18"><circle cx="4" cy="3.500" r="2.500" fill="none" stroke="#fff"/><path d="M4 6v9h2M7 3h8v8" fill="none" stroke="#fff" stroke-width="1.300"/><path d="M11 9l5 8H6z" fill="#f2c200"/><path d="M11 12v3" stroke="#222"/></svg>
    <svg class="tr" viewBox="0 0 16 18"><path d="M1 6h3l4-4v13L4 11H1z" fill="#d0d8e4"/><circle cx="11.500" cy="12" r="4.500" fill="#e03030"/><path d="M9.500 10l4 4M13.500 10l-4 4" stroke="#fff" stroke-width="1.300"/></svg>
    <span class="lang">РУС</span>
    <span class="clock"><span>13:01</span><span>27.12.2016</span></span>
  </div>
</div>
</body>
</html>
```

FILE: styles.css
```css
* { box-sizing: border-box; }
html, body { margin: 0; height: 100%; overflow: hidden; }
body {
  display: flex;
  flex-direction: column;
  width: 1920px;
  height: 1080px;
  font-family: "Open Sans", "Noto Sans", sans-serif;
  background: #fff;
  color: #1a1a1a;
}
.defs { position: absolute; width: 0; height: 0; }
.ic-t { font: 6px "Liberation Sans", sans-serif; fill: #8097ba; }
.ic-q { font: bold 14px "Liberation Sans", sans-serif; fill: #fff; text-anchor: middle; }

/* title bar */
.titlebar {
  height: 23px;
  flex: none;
  display: flex;
  align-items: center;
  background: #9f9f9f;
  border-bottom: 1px solid #7f7f7f;
  position: relative;
}
.app-ico { width: 16px; height: 16px; margin-left: 3px; }
.title-text {
  position: absolute;
  left: 858px;
  width: 202px;
  top: 1px;
  font-size: 14px;
  line-height: 20px;
  color: #2f2f2f;
  text-align: center;
  white-space: nowrap;
}
.win-ctrls { margin-left: auto; display: flex; align-self: flex-start; height: 19px; }
.wc-min { width: 9px; height: 2px; background: #222; margin: 13px 0 0 0; }
.wc-max { width: 10px; height: 11px; border: 1px solid #333; border-top-width: 2px; margin: 5px 0 0 15px; box-shadow: 2px -2px 0 -1px #333; }
.wc-close {
  width: 48px; height: 19px; margin-left: 11px;
  background: #c75050; color: #fff;
  font-size: 11px; line-height: 19px; text-align: center;
}

/* menu */
.menubar {
  height: 25px;
  flex: none;
  display: flex;
  align-items: center;
  background: linear-gradient(90deg, #a9c6f2, #c2d7f7);
  padding-left: 7px;
}
.grip { width: 2px; height: 16px; border-left: 2px dotted #1f3f8f; flex: none; }
.menu {
  list-style: none;
  margin: 0 0 0 9px;
  padding: 0;
  display: flex;
  gap: 16px;
  font-size: 11.5px;
  color: #1a1f2b;
}
.mdi-ctrls { margin-left: auto; display: flex; align-items: center; color: #111; width: 48px; height: 16px; position: relative; }
.mdi-min { width: 6px; height: 2px; background: #111; margin: 8px 0 0 5px; }
.mdi-max { width: 8px; height: 9px; border: 1px solid #111; border-top-width: 2px; margin: 0 0 0 7px; box-shadow: 2px -2px 0 -1px #111; }
.mdi-close { font-size: 11px; margin-left: 9px; line-height: 12px; }

/* toolbars */
.toolstrip {
  height: 26px;
  flex: none;
  display: flex;
  gap: 4px;
  padding-left: 3px;
  background: linear-gradient(90deg, #a9c6f2, #c2d7f7);
}
.tb {
  height: 26px;
  flex: none;
  display: flex;
  align-items: center;
  padding: 0 2px 0 4px;
  border-radius: 4px 4px 0 0;
  background: linear-gradient(180deg, #d9e6fa 0%, #c3d6f5 45%, #a6c0ea 100%);
  border-bottom: 1px solid #3f6fb8;
}
.i { width: 18px; height: 18px; margin: 0 2px; flex: none; }
.sep { width: 1px; height: 18px; background: #fff; margin: 0 2px 0 3px; flex: none; }
.sel {
  width: 22px; height: 22px; flex: none;
  display: flex; align-items: center; justify-content: center;
  background: #fbc67e; border: 1px solid #1b2f7a;
}
.sel .i { margin: 0; }
.tA {
  width: 22px; flex: none; text-align: center;
  font: bold 20px/20px "Liberation Serif", serif;
  color: #1b6a8c;
}
.tA-arrow { text-shadow: 1px 0 0 #1c62c0; }

/* main */
.main { flex: 1; min-height: 0; display: flex; }
.panel { width: 404px; flex: none; display: flex; flex-direction: column; background: #fff; }
.panel-head {
  height: 23px;
  margin: 1px 4px 0 0;
  background: #bccbdc;
  display: flex;
  align-items: center;
  padding-left: 4px;
  font-size: 14.5px;
  color: #1f2b38;
  flex: none;
}
.pin { width: 8px; height: 11px; margin-left: auto; }
.panel-x { font-size: 11px; margin: 0 4px 0 9px; color: #222; }
.panel-tools { display: flex; gap: 3px; padding: 9px 0 0 7px; height: 42px; flex: none; }
.pb {
  width: 24px; height: 24px; flex: none;
  border: 1px solid #8a8a8a;
  background: linear-gradient(180deg, #fafafa, #e4e6ea);
  display: flex; align-items: center; justify-content: center;
}
.pb svg { width: 20px; height: 20px; }
.pb.gap { margin-left: 7px; }
.pb.off { border-color: #d8d8d8; }
.tree {
  margin-left: 5px;
  width: 390px;
  height: 837px;
  flex: none;
  border: 1px solid #8a929a;
  padding-top: 2px;
  font-size: 11.3px;
}
.map-row {
  height: 27px;
  display: flex;
  align-items: center;
  padding-left: 8px;
}
.twist { width: 0; height: 0; border-style: solid; border-width: 0 0 6px 6px; border-color: transparent transparent #444 transparent; flex: none; }
.map-name {
  margin-left: 7px;
  width: 248px;
  height: 26px;
  line-height: 26px;
  padding-left: 5px;
  font-weight: 700;
  font-size: 11.1px;
  white-space: nowrap;
  background: linear-gradient(90deg, #e6e6e6 70%, #fff);
}
.tag-cur { width: 18px; height: 18px; margin-left: auto; margin-right: 8px; }
.lr {
  height: 26px;
  margin-left: 39px;
  margin-right: 2px;
  display: flex;
  align-items: center;
  color: #222;
}
.lr.tall { height: 56px; }
.lr.hid { color: #767676; }
.lr.picked { background: #9ab3d1; }
.lr.picked .acts svg { opacity: .6; }
.cb {
  width: 14px; height: 14px; flex: none; margin-left: 8px;
  border: 1px solid #777;
  background: #fff;
  display: flex; align-items: center; justify-content: center;
  color: #111;
}
.cb svg { width: 11px; height: 11px; }
.cb.dis { background: #e8e8e8; border-color: #b8b8b8; color: #8c8c8c; }
.sym {
  width: 30px; height: 24px; flex: none; margin-left: 5px;
  display: flex; align-items: center; justify-content: center;
  color: #cfcfcf;
}
.sym.star { font: 20px/1 "DejaVu Sans", sans-serif; margin-top: -6px; }
.sym .sw { width: 23px; height: 15px; margin-top: -7px; }
.lr.picked .sym { background: #fff; }
.lr.picked .sym .sw { margin-top: -4px; }
.sym.multi { height: 56px; flex-direction: column; gap: 3px; justify-content: flex-start; }
.sym.multi .xs { width: 26px; height: 18px; flex: none; }
.sym.multi em { font: normal 12px/13px "Liberation Sans", sans-serif; color: #444; }
.nm { margin-left: 7px; flex: 1; white-space: nowrap; }
.acts { display: flex; gap: 5px; padding-right: 4px; margin-top: -2px; flex: none; }
.acts svg { width: 16px; height: 16px; }
.panel-foot { flex: 1; display: flex; align-items: flex-start; gap: 6px; padding: 9px 10px 0 0; }
.foot-msg { margin: 8px auto 0 66px; font-size: 12px; color: #222; }

/* view */
.view {
  flex: 1;
  min-width: 0;
  display: grid;
  grid-template-columns: 26px 1fr 15px;
  grid-template-rows: 21px 1fr 15px;
}
.ruler-corner { background: #fff; border-bottom: 1px solid #808080; }
.hruler {
  display: flex;
  background: #fff;
  border-bottom: 1px solid #808080;
  overflow: hidden;
}
.hruler span {
  width: 27.93px;
  flex: none;
  border-left: 1px solid #000;
  padding-left: 1px;
  font: 700 13.5px/14px "Liberation Sans Narrow", "Liberation Sans", sans-serif;
  letter-spacing: -.4px;
  color: #000;
}
.vbar {
  grid-row: 1 / 3;
  grid-column: 3;
  background: #f0f0f0;
  display: flex;
  flex-direction: column;
  align-items: center;
}
.arr { width: 7px; height: 7px; border: solid #555; border-width: 2px 0 0 2px; flex: none; }
.up-a { transform: rotate(45deg); margin-top: 8px; }
.dn-a { transform: rotate(225deg); margin-top: auto; margin-bottom: 6px; }
.vthumb { width: 15px; height: 17px; background: #cdcdcd; margin-top: 1px; }
.vruler { background: #fff; overflow: hidden; display: flex; flex-direction: column; }
.vruler span {
  height: 27.93px;
  flex: none;
  border-bottom: 1px solid #000;
  padding-left: 2px;
  font: 700 13.5px/11px "Liberation Sans Narrow", "Liberation Sans", sans-serif;
  letter-spacing: -.4px;
  color: #000;
  display: flex;
  align-items: flex-end;
}
.canvas { position: relative; overflow: hidden; background: #bfbfbf; }
.page { position: absolute; left: 17px; top: 18px; right: 0; bottom: 0; background: #fff; }
.report { position: absolute; left: 0; top: 0; width: 1475px; height: 910px; }
.guide { stroke: #000; stroke-width: 1; fill: none; }
.frame { fill: #fff; stroke: #000; stroke-width: 1; }
.cad { font-family: "DejaVu Sans ExtraLight", "DejaVu Sans", sans-serif; font-weight: 200; font-size: 22px; fill: #1a1a1a; }
.parcel { fill: #ffb5b5; stroke: #ffb5b5; stroke-width: 5; stroke-linejoin: round; }
.yel path { fill: none; stroke: #ffff7f; stroke-width: 8; vector-effect: non-scaling-stroke; stroke-linejoin: miter; }
.pur path { fill: none; stroke: #3c0a4a; stroke-width: 4; vector-effect: non-scaling-stroke; stroke-linejoin: round; }
.bnd { fill: none; stroke: #7f3f3f; stroke-width: 4; stroke-linejoin: miter; }
.street { font: 9.5px "Liberation Sans", sans-serif; fill: #444; }
.parcel-id { font: 23px "Liberation Sans Narrow", "Liberation Sans", sans-serif; fill: #111; }
.north { font: 700 14px "Liberation Serif", serif; fill: #000; text-anchor: middle; }
.na-l { fill: #fff; stroke: #444; stroke-width: .7; }
.na-r { fill: #000; stroke: #000; stroke-width: .7; }
.sb-k { fill: #000; }
.sb-o { fill: none; stroke: #000; stroke-width: 1; }
.scale { font: 11px "Liberation Sans", sans-serif; fill: #111; }

/* result table */
.res {
  position: absolute;
  left: 835px;
  top: 71px;
  width: 497px;
  table-layout: fixed;
  border-collapse: collapse;
  background: #fff;
  font-size: 8.5px;
  color: #222;
  border-left: 1px solid #5f8fc0;
  border-right: 1px solid #5f8fc0;
}
.c1 { width: 23.5px; } .c2 { width: 64px; } .c3 { width: 94px; } .c4 { width: 53.4px; }
.c5 { width: 58px; } .c6 { width: 58.6px; } .c7 { width: 72px; } .c8 { width: 73px; }
.res th {
  height: 18px;
  padding: 1px 2px 0 4px;
  font-weight: 700;
  font-size: 8.4px;
  text-align: left;
  white-space: nowrap;
  overflow: hidden;
  background: linear-gradient(180deg, #fff, #ececec);
  border-top: 1px solid #5f8fc0;
  border-bottom: 1px solid #c8d4dc;
}
.res td {
  height: 15.52px;
  padding: 1px 4px 0 3px;
  line-height: 13px;
  white-space: nowrap;
  overflow: hidden;
  border-right: 1px solid #c8d4dc;
  border-bottom: 1px solid #c8d4dc;
}
.res tbody tr:nth-child(odd) td { background: #ebfdff; }
.res td:nth-child(1), .res td:nth-child(4), .res td:nth-child(7), .res td:nth-child(8) { text-align: right; }
.res th:nth-child(4), .res th:nth-child(8) { text-align: right; }

.hbar {
  grid-column: 1 / 3;
  background: #f0f0f0;
  display: flex;
  align-items: center;
}
.hthumb { width: 17px; height: 15px; background: #cdcdcd; margin-left: 4px; flex: none; }
.hbar .lf-a { transform: rotate(-45deg); margin-left: 9px; }
.hbar .rt-a { transform: rotate(135deg); margin-left: auto; margin-right: 6px; }
.sb-corner { background: #c8c8c8; }

/* status */
.status {
  height: 20px;
  flex: none;
  background: #f0f0f0;
  border-top: 1px solid #cfcfcf;
  font-size: 11.5px;
  display: flex;
  align-items: center;
}
.st-cell { width: 220px; height: 100%; padding-left: 3px; border-right: 1px solid #d0d0d0; line-height: 18px; }

/* taskbar */
.taskbar {
  height: 40px;
  flex: none;
  background: #3f5b78;
  display: flex;
  align-items: center;
  color: #fff;
}
.start { width: 26px; height: 26px; margin-left: 11px; flex: none; }
.ie { width: 34px; height: 34px; margin-left: 28px; margin-right: 17px; flex: none; overflow: visible; }
.ie-e { font: 700 30px "Liberation Sans", sans-serif; fill: #25a5e8; text-anchor: middle; }
.word-w { font: 700 15px "Liberation Serif", serif; fill: #fff; text-anchor: middle; }
.tk {
  width: 58px;
  height: 38px;
  margin-right: 4px;
  flex: none;
  display: flex;
  align-items: center;
  justify-content: center;
  background: #61788f;
  border: 1px solid #7d91a5;
}
.tk svg { width: 30px; height: 30px; }
.tk-stack { box-shadow: inset -5px 0 0 #566d85; }
.tk-on { background: linear-gradient(180deg, #7d91a5, #8d9fb1); border-color: #dfe6ee; }
.tray { margin-left: auto; display: flex; align-items: center; height: 100%; }
.tray-up { width: 0; height: 0; border: solid transparent; border-width: 0 4px 5px; border-bottom-color: #fff; margin-right: 13px; }
.tr { width: 16px; height: 18px; margin-right: 8px; }
.lang { font-size: 12px; margin: 0 18px 0 7px; }
.clock { display: flex; flex-direction: column; align-items: center; width: 56px; margin-right: 18px; font-size: 12px; line-height: 18px; }
```
